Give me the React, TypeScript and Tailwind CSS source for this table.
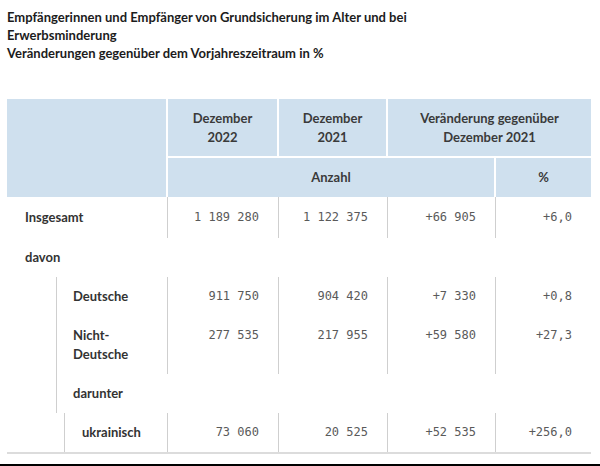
import React from 'react';

interface Row {
  label: string[];
  values?: string[];
  indent?: 'none' | 'group' | 'sub';
  pad?: string;
}

const rows: Row[] = [
  { label: ['Insgesamt'], values: ['1 189 280', '1 122 375', '+66 905', '+6,0'], indent: 'none', pad: 'py-[11px]' },
  { label: ['davon'], indent: 'none' },
  { label: ['Deutsche'], values: ['911 750', '904 420', '+7 330', '+0,8'], indent: 'group' },
  { label: ['Nicht-', 'Deutsche'], values: ['277 535', '217 955', '+59 580', '+27,3'], indent: 'group' },
  { label: ['darunter'], indent: 'group' },
  { label: ['ukrainisch'], values: ['73 060', '20 525', '+52 535', '+256,0'], indent: 'sub' },
];

const valueWidths = ['w-[111px]', 'w-[109px]', 'w-[108px]', 'w-[96px]'];

function BodyRow({ row }: { row: Row }) {
  const pad = row.pad || 'py-[10px]';

  // label cell, nested rows get a left rule
  let labelCell;
  if (row.indent === 'group') {
    labelCell = (
      <div className="w-[160px] shrink-0 flex">
        <div className="w-[49px] shrink-0" />
        <div className={`flex-1 border-l border-[#cfcfcf] pl-[16px] ${pad}`}>
          {row.label.map((l) => <div key={l}>{l}</div>)}
        </div>
      </div>
    );
  } else if (row.indent === 'sub') {
    labelCell = (
      <div className="w-[160px] shrink-0 flex">
        <div className="w-[57px] shrink-0" />
        <div className={`flex-1 border-l border-[#cfcfcf] pl-[17px] ${pad}`}>
          {row.label.map((l) => <div key={l}>{l}</div>)}
        </div>
      </div>
    );
  } else {
    labelCell = (
      <div className={`w-[160px] shrink-0 pl-[18px] ${pad}`}>
        {row.label.map((l) => <div key={l}>{l}</div>)}
      </div>
    );
  }

  return (
    <div className="flex font-bold text-[13px] leading-[19px] text-[#333]">
      {labelCell}
      {row.values && row.values.map((v, i) => (
        <div
          key={i}
          className={`${valueWidths[i]} shrink-0 border-l border-[#cfcfcf] text-right pr-[19px] ${pad} font-['DejaVu_Sans_Mono',monospace] font-normal text-[12px] text-[#5a5a5a]`}
        >
          {v}
        </div>
      ))}
    </div>
  );
}

export default function App() {
  return (
    <div className="w-[600px] h-[466px] bg-white flex flex-col font-['Lato','Liberation_Sans',sans-serif] overflow-hidden">
      {/* Title */}
      <div className="px-[7px] pt-[8px] text-[13px] leading-[18px] font-bold text-[#1c1c1c]">
        <div>Empfängerinnen und Empfänger von Grundsicherung im Alter und bei</div>
        <div>Erwerbsminderung</div>
        <div>Veränderungen gegenüber dem Vorjahreszeitraum in %</div>
      </div>

      <div className="mx-[7px] mt-[37px] w-[584px]">
        {/* Header */}
        <div className="grid grid-cols-[159px_109px_107px_106px_95px] grid-rows-[57px_39px] bg-white gap-[2px] text-[13px] leading-[19px] font-bold text-[#3a3a3a] text-center">
          <div className="row-span-2 bg-[#cfe0ee]" />
          <div className="bg-[#cfe0ee] flex items-center justify-center">
            <div>Dezember<br />2022</div>
          </div>
          <div className="bg-[#cfe0ee] flex items-center justify-center">
            <div>Dezember<br />2021</div>
          </div>
          <div className="col-span-2 bg-[#cfe0ee] flex items-center justify-center">
            <div>Veränderung gegenüber<br />Dezember 2021</div>
          </div>
          <div className="col-span-3 bg-[#cfe0ee] flex items-center justify-center">Anzahl</div>
          <div className="bg-[#cfe0ee] flex items-center justify-center">%</div>
        </div>

        {/* Body */}
        <div className="border-b-2 border-[#dcdcdc]">
          {rows.map((r) => <BodyRow key={r.label.join('')} row={r} />)}
        </div>
      </div>

      <div className="mt-auto h-[2px] bg-black" />
    </div>
  );
}
